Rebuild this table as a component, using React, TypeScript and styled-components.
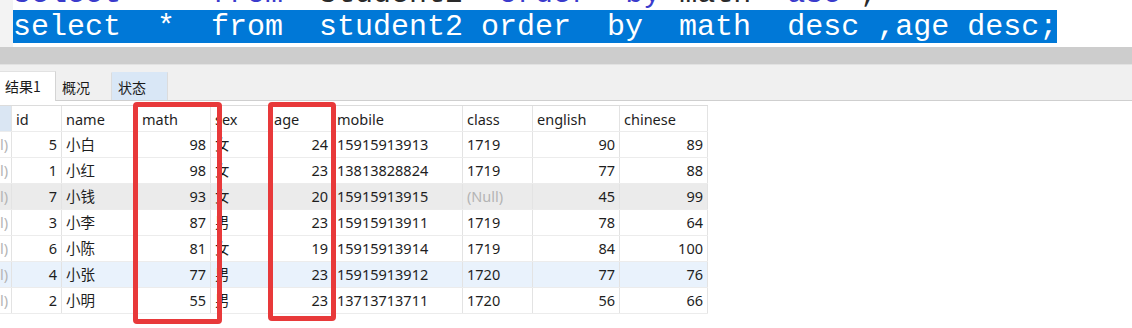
import React from 'react';
import styled, {createGlobalStyle} from "styled-components";

const GlobalStyle = createGlobalStyle`
    html, body {
        margin: 0;
        padding: 0;
        background: #fff;
    }
    * {
        box-sizing: border-box;
    }
`;

const COLS = "12px 50px 76px 73px 59px 63px 130px 70px 87px 88px";

type Align = "left" | "right";

const headers: { title: string, align: Align }[] = [
    {title: "id", align: "left"},
    {title: "name", align: "left"},
    {title: "math", align: "left"},
    {title: "sex", align: "left"},
    {title: "age", align: "left"},
    {title: "mobile", align: "left"},
    {title: "class", align: "left"},
    {title: "english", align: "left"},
    {title: "chinese", align: "left"},
];

const aligns: Align[] = ["right", "left", "right", "left", "right", "left", "left", "right", "right"];

const rows: { cells: (string | null)[], tone?: "gray" | "blue" }[] = [
    {cells: ["5", "小白", "98", "女", "24", "15915913913", "1719", "90", "89"]},
    {cells: ["1", "小红", "98", "女", "23", "13813828824", "1719", "77", "88"]},
    {cells: ["7", "小钱", "93", "女", "20", "15915913915", null, "45", "99"], tone: "gray"},
    {cells: ["3", "小李", "87", "男", "23", "15915913911", "1719", "78", "64"]},
    {cells: ["6", "小陈", "81", "女", "19", "15915913914", "1719", "84", "100"]},
    {cells: ["4", "小张", "77", "男", "23", "15915913912", "1720", "77", "76"], tone: "blue"},
    {cells: ["2", "小明", "55", "男", "23", "13713713711", "1720", "56", "66"]},
];

export default function App() {
    return (
        <Page>
            <GlobalStyle/>
            <Editor>
                <Gutter/>
                <Code>
                    <CodeLine>
                        <Kw>select</Kw>  *  <Kw>from</Kw>  student2  <Kw>order</Kw>  <Kw>by</Kw> math  <Kw>asc</Kw> ;
                    </CodeLine>
                    <CodeLine selected>select  *  from  student2 order  by  math  desc ,age desc;</CodeLine>
                </Code>
            </Editor>
            <Splitter/>
            <TabBar>
                <Tab active>结果1</Tab>
                <Tab>概况</Tab>
                <Tab tint>状态</Tab>
            </TabBar>
            <Grid>
                <Row header>
                    <Cell header lead/>
                    {headers.map(h => <Cell key={h.title} header align={h.align}>{h.title}</Cell>)}
                </Row>
                {rows.map((r, i) => (
                    <Row key={i} tone={r.tone}>
                        <Cell lead><NullClip>(Null)</NullClip></Cell>
                        {r.cells.map((c, j) => (
                            <Cell key={j} align={aligns[j]}>
                                {c === null ? <NullText>(Null)</NullText> : c}
                            </Cell>
                        ))}
                    </Row>
                ))}
            </Grid>
            <Mark left={133} width={89} height={222}/>
            <Mark left={268} width={68} height={219}/>
        </Page>
    );
}

const Page = styled.div`
    position: relative;
    width: 1132px;
    height: 328px;
    overflow: hidden;
    background: #fff;
    font-family: "Noto Sans", "Noto Sans CJK SC", sans-serif;
`;

const Editor = styled.div`
    display: flex;
    height: 47px;
    overflow: hidden;
    background: #fff;
`;

const Gutter = styled.div`
    width: 13px;
    flex-shrink: 0;
    background: #f3f3f3;
`;

const Code = styled.div`
    display: flex;
    flex-direction: column;
    align-items: flex-start;
    margin-top: -23px;
`;

// padding-top nudges the glyphs down inside the 33px selection band
const CodeLine = styled.div<{ selected?: boolean }>`
    font-family: "Liberation Mono", monospace;
    font-size: 30px;
    line-height: 31px;
    height: 33px;
    padding-top: 2px;
    white-space: pre;
    color: ${p => p.selected ? "#fff" : "#2a2a2a"};
    background: ${p => p.selected ? "#0078d7" : "transparent"};
`;

const Kw = styled.span`
    color: #3b3bcc;
`;

const Splitter = styled.div`
    height: 18px;
    background: #cdcdcd;
    border-bottom: 1px solid #e2e2e2;
`;

const TabBar = styled.div`
    display: flex;
    align-items: flex-end;
    height: 36px;
    background: #f0f0f0;
    border-bottom: 1px solid #cfcfcf;
`;

const Tab = styled.div<{ active?: boolean, tint?: boolean }>`
    width: 56px;
    height: ${p => p.active ? "30px" : "28px"};
    margin-bottom: ${p => p.active ? "-1px" : "0"};
    display: flex;
    align-items: center;
    padding-left: ${p => p.active ? "5px" : "6px"};
    padding-bottom: ${p => p.active ? "2px" : "0"};
    font-family: "Noto Sans CJK SC", sans-serif;
    font-size: 14px;
    color: #1a1a1a;
    background: ${p => p.active ? "#fff" : p.tint ? "#d9e7f6" : "#f0f0f0"};
    border-right: 1px solid ${p => p.active ? "#d4d4d4" : "#dcdcdc"};
    border-top: 1px solid ${p => p.active ? "#e2e2e2" : "transparent"};
`;

const Grid = styled.div`
    margin-top: 4px;
    width: 708px;
`;

const Row = styled.div<{ header?: boolean, tone?: "gray" | "blue" }>`
    display: grid;
    grid-template-columns: ${COLS};
    height: ${p => p.header ? "27px" : "26px"};
    border-top: ${p => p.header ? "1px solid #dcdcdc" : "none"};
    border-bottom: 1px solid #ececec;
    background: ${p => p.tone === "gray" ? "#ebebeb" : p.tone === "blue" ? "#e9f2fc" : "#fff"};
`;

const Cell = styled.div<{ align?: Align, header?: boolean, lead?: boolean }>`
    overflow: hidden;
    white-space: nowrap;
    padding: 0 4px;
    font-size: 14.5px;
    line-height: ${p => p.header ? "26px" : "25px"};
    color: #1e1e1e;
    text-align: ${p => p.align ?? "left"};
    border-right: 1px solid #e3e3e3;
    background: ${p => p.header && p.lead ? "#dae6f3" : "transparent"};
    ${p => p.lead ? "padding: 0 3px 0 0;" : ""}
`;

const NullClip = styled.div`
    display: flex;
    justify-content: flex-end;
    color: #b4b4b4;
`;

const NullText = styled.span`
    color: #b4b4b4;
`;

const Mark = styled.div<{ left: number, width: number, height: number }>`
    position: absolute;
    top: 102px;
    left: ${p => p.left}px;
    width: ${p => p.width}px;
    height: ${p => p.height}px;
    border: 5px solid #e8393a;
    border-radius: 4px;
`;
